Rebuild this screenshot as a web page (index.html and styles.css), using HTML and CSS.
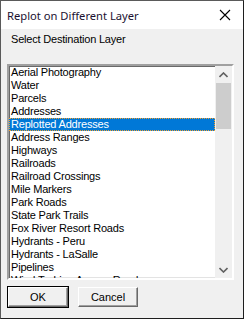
FILE: index.html
```html
<!DOCTYPE html>
<html>
<head>
    <title>Replot on Different Layer</title>
    <meta http-equiv="Content-Type" content="text/html; charset=utf-8" />
    <link rel="stylesheet" href="styles.css">
</head>

<body>
    <div class="window">
        <div class="titlebar">
            <span class="title">Replot on Different Layer</span>
            <svg class="close" width="12" height="12" viewBox="0 0 12 12">
                <path d="M1 1 L11 11 M11 1 L1 11" stroke="#000" stroke-width="1.1" fill="none"/>
            </svg>
        </div>
        <div class="content">
            <div class="caption">Select Destination Layer</div>
            <div class="listbox">
                <ul class="items">
                    <li>Aerial Photography</li>
                    <li>Water</li>
                    <li>Parcels</li>
                    <li>Addresses</li>
                    <li class="selected">Replotted Addresses</li>
                    <li>Address Ranges</li>
                    <li>Highways</li>
                    <li>Railroads</li>
                    <li>Railroad Crossings</li>
                    <li>Mile Markers</li>
                    <li>Park Roads</li>
                    <li>State Park Trails</li>
                    <li>Fox River Resort Roads</li>
                    <li>Hydrants - Peru</li>
                    <li>Hydrants - LaSalle</li>
                    <li>Pipelines</li>
                    <li>Wind Turbine Access Roads</li>
                </ul>
                <div class="scrollbar">
                    <div class="arrow">
                        <svg width="9" height="6" viewBox="0 0 9 6">
                            <path d="M0.5 5 L4.5 1 L8.5 5" stroke="#606060" stroke-width="1.6" fill="none"/>
                        </svg>
                    </div>
                    <div class="track">
                        <div class="thumb"></div>
                    </div>
                    <div class="arrow">
                        <svg width="9" height="6" viewBox="0 0 9 6">
                            <path d="M0.5 1 L4.5 5 L8.5 1" stroke="#606060" stroke-width="1.6" fill="none"/>
                        </svg>
                    </div>
                </div>
            </div>
            <div class="buttons">
                <button class="btn default">OK</button>
                <button class="btn">Cancel</button>
            </div>
        </div>
    </div>
</body>
</html>
```

FILE: styles.css
```css
body {
    margin: 0;
    background-color: #fff;
}
.window {
    width: 244px;
    height: 319px;
    box-sizing: border-box;
    border: 1px solid #5a5a5a;
    border-right-color: #1e1e1e;
    border-bottom-color: #1e1e1e;
    background-color: #f0f0f0;
    display: flex;
    flex-direction: column;
}
.titlebar {
    height: 28px;
    background-color: #fff;
    display: flex;
    align-items: center;
    justify-content: space-between;
    padding: 0 12px 0 6px;
}
.title {
    font-family: "Noto Sans", sans-serif;
    font-size: 11.2px;
    color: #1a1030;
}
.close {
    display: block;
}
.content {
    flex: 1;
    padding: 4px 9px 0 6px;
    display: flex;
    flex-direction: column;
    font-family: "Liberation Sans", Arial, sans-serif;
    font-size: 11px;
    letter-spacing: -0.2px;
    color: #000;
}
.caption {
    padding-left: 4px;
    line-height: 13px;
    margin-bottom: 18px;
}
.listbox {
    height: 216px;
    box-sizing: border-box;
    border: 2px solid;
    border-color: #a0a0a0 #fff #fff #a0a0a0;
    box-shadow: inset 1px 1px 0 #696969, inset -1px -1px 0 #e3e3e3;
    background-color: #fff;
    display: flex;
    overflow: hidden;
}
.items {
    flex: 1;
    list-style: none;
    margin: 0;
    padding: 0;
    overflow: hidden;
}
.items li {
    height: 13px;
    line-height: 13px;
    padding-left: 2px;
    white-space: nowrap;
}
.items li.selected {
    background-color: #0078d7;
    color: #fff;
    outline: 1px dotted #f0a030;
    outline-offset: -1px;
}
.scrollbar {
    width: 17px;
    background-color: #f0f0f0;
    display: flex;
    flex-direction: column;
}
.arrow {
    height: 17px;
    display: flex;
    align-items: center;
    justify-content: center;
}
.track {
    flex: 1;
}
.thumb {
    height: 46px;
    margin: 0 1px;
    background-color: #cdcdcd;
}
.buttons {
    display: flex;
    gap: 10px;
    margin-top: 7px;
    padding-left: 1px;
}
.btn {
    width: 60px;
    height: 20px;
    box-sizing: border-box;
    font-family: "Liberation Sans", Arial, sans-serif;
    font-size: 11px;
    color: #000;
    background-color: #f0f0f0;
    border: 1px solid;
    border-color: #fff #696969 #696969 #fff;
    box-shadow: inset -1px -1px 0 #a0a0a0;
    padding: 0;
}
.btn.default {
    outline: 1px solid #000;
}
```
